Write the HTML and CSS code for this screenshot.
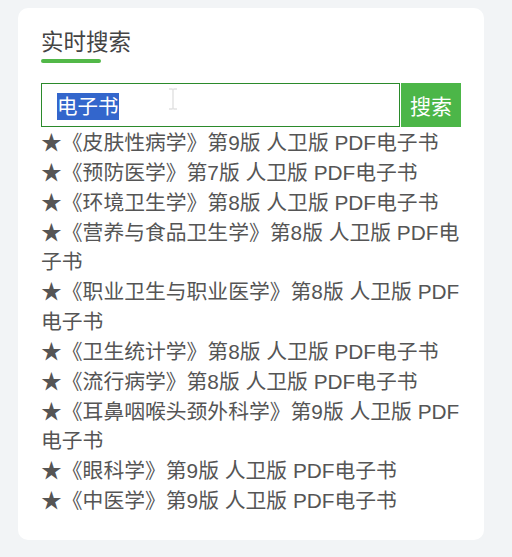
FILE: index.html
```html
<!DOCTYPE html>
<html lang="zh-CN">
<head>
    <meta charset="UTF-8">
    <meta name="viewport" content="width=device-width, initial-scale=1.0">
    <title>实时搜索</title>
    <link rel="stylesheet" href="styles.css">
</head>
<body>

    <div class="panel">
        <h3 class="panel-title">实时搜索</h3>

        <form class="search-bar" onsubmit="return false">
            <div class="search-field">
                <span class="search-input"><span class="picked">电子书</span></span>
                <svg class="ibeam" width="10" height="22" viewBox="0 0 10 22">
                    <path d="M1 1h3l1 1 1-1h3M5 2v18M1 21h3l1-1 1 1h3" fill="none" stroke="#e2e2e2" stroke-width="1.4"/>
                </svg>
            </div>
            <button class="search-btn">搜索</button>
        </form>

        <ul class="result-list">
            <li>★《皮肤性病学》第9版 人卫版 PDF电子书</li>
            <li>★《预防医学》第7版 人卫版 PDF电子书</li>
            <li>★《环境卫生学》第8版 人卫版 PDF电子书</li>
            <li>★《营养与食品卫生学》第8版 人卫版 PDF电子书</li>
            <li>★《职业卫生与职业医学》第8版 人卫版 PDF电子书</li>
            <li>★《卫生统计学》第8版 人卫版 PDF电子书</li>
            <li>★《流行病学》第8版 人卫版 PDF电子书</li>
            <li>★《耳鼻咽喉头颈外科学》第9版 人卫版 PDF电子书</li>
            <li>★《眼科学》第9版 人卫版 PDF电子书</li>
            <li>★《中医学》第9版 人卫版 PDF电子书</li>
        </ul>
    </div>

</body>
</html>
```

FILE: styles.css
```css
body {
    margin: 0;
    padding: 8px 28px 17px 18px;
    background-color: #f2f4f6;
    font-family: "Liberation Sans", "Noto Sans CJK SC", sans-serif;
}

.panel {
    width: 420px;
    background-color: #fff;
    border-radius: 10px;
    padding: 20px 23px 24px;
}

.panel-title {
    margin: 0;
    font-size: 22.5px;
    font-weight: normal;
    line-height: 30px;
    color: #444;
}

.panel-title::after {
    content: '';
    display: block;
    width: 60px;
    height: 4px;
    margin-top: 1px;
    background-color: #52b848;
    border-radius: 2px;
}

.search-bar {
    display: flex;
    gap: 1px;
    margin-top: 20px;
}

.search-field {
    position: relative;
    width: 360px;
    height: 44px;
    box-sizing: border-box;
    border: 1px solid #2b8a2b;
    display: flex;
    align-items: center;
    padding-left: 15px;
}

.search-input {
    font-size: 20.5px;
    color: #fff;
}

.picked {
    background-color: #3366cc;
    padding: 2px 0;
}

.ibeam {
    position: absolute;
    left: 126px;
    top: 4px;
}

.search-btn {
    width: 60px;
    height: 44px;
    border: none;
    padding: 0;
    background-color: #4cb648;
    color: #fff;
    font-family: inherit;
    font-size: 21px;
    cursor: pointer;
}

.result-list {
    list-style: none;
    margin: 1px 0 0;
    padding: 0;
    font-size: 20.8px;
    line-height: 29.85px;
    color: #555;
}
```
